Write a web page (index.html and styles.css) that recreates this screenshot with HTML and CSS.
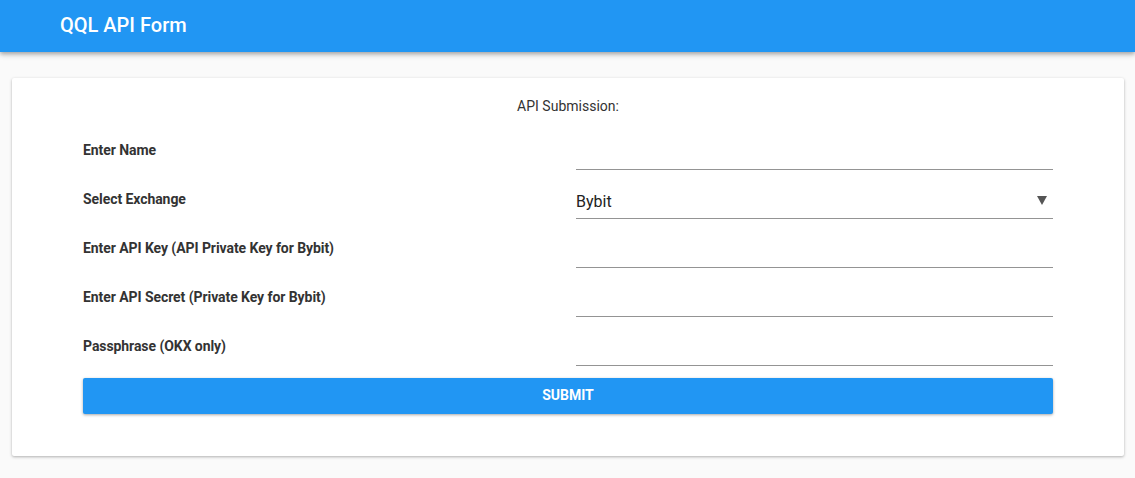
FILE: index.html
```html
<!DOCTYPE html>
<html>
<head>
<meta charset="utf-8">
<link rel="stylesheet" href="styles.css">
</head>
<body>
<header class="app-bar"><h1 class="app-title">QQL API Form</h1></header>
<main class="page">
  <form class="card">
    <div class="card-title">API Submission:</div>
    <div class="row">
      <label class="label">Enter Name</label>
      <input class="field" type="text">
    </div>
    <div class="row">
      <label class="label">Select Exchange</label>
      <div class="select-wrap">
        <select class="field select"><option>Bybit</option><option>OKX</option></select>
        <svg class="arrow" width="10" height="9" viewBox="0 0 10 9"><polygon points="0,0 10,0 5,9" fill="#555"/></svg>
      </div>
    </div>
    <div class="row">
      <label class="label">Enter API Key (API Private Key for Bybit)</label>
      <input class="field" type="text">
    </div>
    <div class="row">
      <label class="label">Enter API Secret (Private Key for Bybit)</label>
      <input class="field" type="text">
    </div>
    <div class="row">
      <label class="label">Passphrase (OKX only)</label>
      <input class="field" type="text">
    </div>
    <button class="submit" type="button">Submit</button>
  </form>
</main>
</body>
</html>
```
FILE: styles.css
```css
* { box-sizing: border-box; }
html, body { margin: 0; padding: 0; }
body {
  background: #fafafa;
  font-family: Roboto, "Liberation Sans", Arial, sans-serif;
  color: #333;
  height: 478px;
  overflow: hidden;
}
.app-bar {
  height: 52px;
  background: #2196f3;
  box-shadow: 0 2px 4px rgba(0,0,0,0.25), 0 3px 6px rgba(0,0,0,0.12);
  display: flex;
  align-items: center;
  padding-left: 60px;
  position: relative;
}
.app-title {
  margin: 0;
  color: #fff;
  font-size: 20px;
  font-weight: 500;
  line-height: 24px;
  margin-top: -3px;
}
.page {
  padding: 26px 11px 0 12px;
}
.card {
  background: #fff;
  box-shadow: 0 1px 3px rgba(0,0,0,0.3);
  border-radius: 2px;
  padding: 18px 71px 42px 71px;
  height: 378px;
}
.card-title {
  text-align: center;
  font-size: 14px;
  line-height: 20px;
  color: #333;
  margin-bottom: 5px;
}
.row {
  display: flex;
  height: 49px;
}
.label {
  flex: 1;
  font-size: 14px;
  font-weight: 700;
  line-height: 20px;
  padding-top: 19px;
  color: #333;
  letter-spacing: -0.07px;
}
.field {
  width: 477px;
  height: 34px;
  margin-top: 15px;
  border: none;
  border-bottom: 1px solid #949494;
  outline: none;
  font-family: inherit;
  font-size: 16px;
  color: #222;
  padding: 0;
  background: transparent;
}
.select-wrap {
  position: relative;
  width: 477px;
}
.select {
  -webkit-appearance: none;
  appearance: none;
  border-radius: 0;
  padding-top: 0;
}
.arrow {
  position: absolute;
  right: 6px;
  top: 26px;
  pointer-events: none;
}
.submit {
  display: block;
  width: 100%;
  height: 36px;
  margin-top: 12px;
  background: #2196f3;
  color: #fff;
  border: none;
  border-radius: 2px;
  font-family: inherit;
  font-size: 14px;
  font-weight: 700;
  text-transform: uppercase;
  line-height: 34px;
  padding: 0 0 2px 0;
  box-shadow: 0 1px 3px rgba(0,0,0,0.35);
}
```
